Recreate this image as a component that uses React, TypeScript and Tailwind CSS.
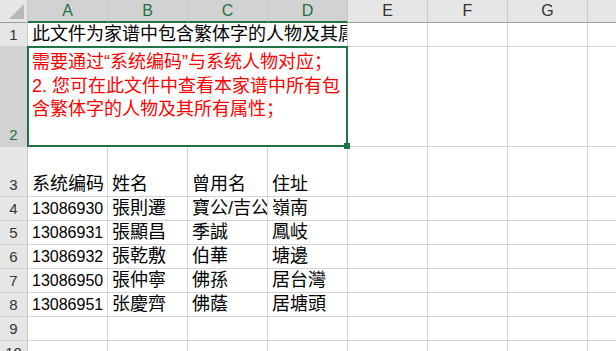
import React from 'react';

const columns = ['A', 'B', 'C', 'D', 'E', 'F', 'G', 'H'];
const selectedCols = ['A', 'B', 'C', 'D'];

const people = [
  ['13086930', '張則遷', '寶公/吉公', '嶺南'],
  ['13086931', '張顯昌', '季誠', '鳳岐'],
  ['13086932', '張乾敷', '伯華', '塘邊'],
  ['13086950', '張仲寧', '佛孫', '居台灣'],
  ['13086951', '张慶齊', '佛蔭', '居塘頭'],
];

const cellBase =
  'border-r border-b border-[#d4d4d4] bg-white flex items-end overflow-hidden whitespace-nowrap pl-[4px] leading-[23px]';

const RowHead: React.FC<{ n: number; selected?: boolean }> = ({ n, selected }) => (
  <div
    className={`flex items-end justify-center overflow-hidden border-r border-b border-r-[#c8c8c8] border-b-[#d0d0d0] text-[15px] leading-[23px] ${
      selected ? 'bg-[#d2d2d2] text-[#217346]' : 'bg-[#e6e6e6] text-[#333]'
    }`}
  >
    {n}
  </div>
);

const EmptyCells: React.FC<{ count: number }> = ({ count }) => (
  <>
    {Array.from({ length: count }).map((_, i) => (
      <div key={i} className={cellBase} />
    ))}
  </>
);

export default function App() {
  return (
    <div className="w-[616px] h-[351px] overflow-hidden bg-white font-['Liberation_Sans','Noto_Sans_CJK_SC',sans-serif] text-black">
      <div className="grid grid-cols-[28px_repeat(7,80px)_80px] grid-rows-[23px_24px_100px_50px_repeat(6,24px)]">
        {/* corner */}
        <div className="relative bg-[#e6e6e6] border-r border-b border-r-[#c8c8c8] border-b-[#9e9e9e]">
          <svg className="absolute right-[3px] bottom-[3px]" width="15" height="15" viewBox="0 0 15 15">
            <polygon points="15,0 15,15 0,15" fill="#b7b7b7" />
          </svg>
        </div>

        {/* column headers */}
        {columns.map((c) => {
          const sel = selectedCols.includes(c);
          return (
            <div
              key={c}
              className={`flex items-center justify-center border-r border-r-[#c8c8c8] text-[16px] ${
                sel
                  ? 'bg-[#d2d2d2] text-[#217346] border-b-2 border-b-[#217346]'
                  : 'bg-[#e6e6e6] text-[#333] border-b border-b-[#9e9e9e]'
              }`}
            >
              {c}
            </div>
          );
        })}

        {/* row 1 */}
        <RowHead n={1} />
        <div className={`${cellBase} col-span-4 text-[18px]`}>
          此文件为家谱中包含繁体字的人物及其属性信息
        </div>
        <EmptyCells count={4} />

        {/* row 2 */}
        <RowHead n={2} selected />
        <div className="relative col-span-4 border-r border-b border-[#d4d4d4] bg-white">
          <div className="pt-[4px] pl-[4px] text-[18px] leading-[23.5px] text-[#ff0000] whitespace-nowrap overflow-hidden">
            <div>需要通过“系统编码”与系统人物对应；</div>
            <div>2. 您可在此文件中查看本家谱中所有包</div>
            <div>含繁体字的人物及其所有属性；</div>
          </div>
          <div className="absolute -inset-px border-2 border-[#217346]" />
          <div className="absolute -right-[3px] -bottom-[3px] w-[6px] h-[6px] bg-[#217346]" />
        </div>
        <EmptyCells count={4} />

        {/* row 3 */}
        <RowHead n={3} />
        {['系统编码', '姓名', '曾用名', '住址'].map((t) => (
          <div key={t} className={`${cellBase} text-[18px]`}>
            {t}
          </div>
        ))}
        <EmptyCells count={4} />

        {/* rows 4-8 */}
        {people.map((p, i) => (
          <React.Fragment key={p[0]}>
            <RowHead n={i + 4} />
            <div className={`${cellBase} text-[16px]`}>{p[0]}</div>
            <div className={`${cellBase} text-[18px]`}>{p[1]}</div>
            <div className={`${cellBase} text-[18px]`}>{p[2]}</div>
            <div className={`${cellBase} text-[18px]`}>{p[3]}</div>
            <EmptyCells count={4} />
          </React.Fragment>
        ))}

        {/* rows 9-10 */}
        <RowHead n={9} />
        <EmptyCells count={8} />
        <RowHead n={10} />
        <EmptyCells count={8} />
      </div>
    </div>
  );
}
